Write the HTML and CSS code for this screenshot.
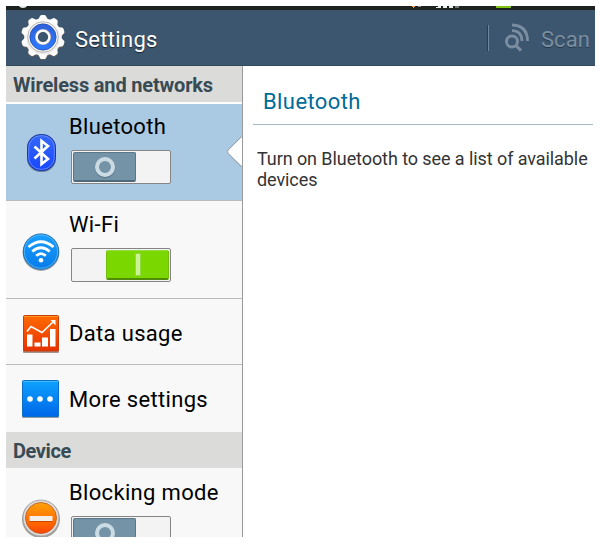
FILE: index.html
```html
<!DOCTYPE html>
<html lang="en">
<head>
    <meta charset="UTF-8">
    <meta name="viewport" content="width=device-width, initial-scale=1.0">
    <title>Settings</title>
    <link rel="stylesheet" href="styles.css">
</head>
<body>
    <div class="screen">
        <svg class="status-bar" width="589" height="4" viewBox="0 0 589 4">
            <path d="M13 0h8q-1 2-4 2q-3 0-4-2z" fill="#e8eeec"/>
            <path d="M406 0h3v1h-1v1h-1v-1h-1z" fill="#f39a32"/>
            <path d="M412 0h3v1h-3z" fill="#858b8a"/>
            <path d="M432 0h3v2h-5v-1h2zM437 0h4v2h-4zM443 0h4v2h-4z" fill="#edf1ee"/>
            <path d="M449 0h4v2h-4z" fill="#747a78"/>
            <path d="M490 0h15v2h-15z" fill="#82c414"/>
        </svg>

        <header class="header">
            <svg class="gear" width="46" height="46" viewBox="0 0 46 46">
                <defs>
                    <linearGradient id="metal" x1="0" y1="0" x2="0" y2="46" gradientUnits="userSpaceOnUse">
                        <stop offset="0" stop-color="#ffffff"/>
                        <stop offset="1" stop-color="#e9e6e5"/>
                    </linearGradient>
                    <linearGradient id="ring" x1="0" y1="0" x2="0" y2="1">
                        <stop offset="0" stop-color="#2f62dc"/>
                        <stop offset="1" stop-color="#2c78ff"/>
                    </linearGradient>
                </defs>
                <g fill="url(#metal)" class="gear-body">
                    <circle cx="23" cy="23" r="18.8"/>
                    <g id="teeth">
                        <path id="tooth" d="M18 6l1.8-3.5Q20.3 1 21.5 1h3q1.2 0 1.7 1.5L28 6z"/>
                        <use href="#tooth" transform="rotate(36 23 23)"/>
                        <use href="#tooth" transform="rotate(72 23 23)"/>
                        <use href="#tooth" transform="rotate(108 23 23)"/>
                        <use href="#tooth" transform="rotate(144 23 23)"/>
                    </g>
                    <use href="#teeth" transform="rotate(180 23 23)"/>
                </g>
                <circle cx="23" cy="23" r="15.3" fill="#f5f3f1" stroke="#aaa8a8" stroke-width=".8"/>
                <circle cx="23" cy="23" r="10" fill="none" stroke="url(#ring)" stroke-width="6.4"/>
                <circle cx="23" cy="23" r="13.1" fill="none" stroke="#244ba7" stroke-width=".7"/>
                <circle cx="23" cy="23" r="6.6" fill="#3b566e" stroke="#a9a8a9" stroke-width="3"/>
                <circle cx="23" cy="23" r="6.4" fill="none" stroke="#fff" stroke-width="2.2"/>
            </svg>
            <h1>Settings</h1>
            <button class="scan" disabled>
                <svg width="28" height="30" viewBox="0 0 28 30" fill="none" stroke="#7b8da0">
                    <circle cx="9" cy="18.5" r="5.5" stroke-width="3"/>
                    <path d="M13 22.5l5 5.2" stroke-width="3.2"/>
                    <path d="M9 7.6Q18.7 7.7 19 18" stroke-width="2.8"/>
                    <path d="M9 2Q24.3 2.5 24.6 18" stroke-width="2.8"/>
                </svg>
                <span>Scan</span>
            </button>
        </header>

        <div class="content">
            <nav class="sidebar">
                <h2 class="section">Wireless and networks</h2>

                <div class="item item-switch selected">
                    <svg class="icon" width="40" height="40" viewBox="0 0 40 40">
                        <defs>
                            <linearGradient id="bt" x1="0" y1="0" x2="0" y2="1">
                                <stop offset="0" stop-color="#3568f8"/>
                                <stop offset="1" stop-color="#1848ff"/>
                            </linearGradient>
                        </defs>
                        <rect x="6" y="1.5" width="29" height="37.5" rx="13.5" fill="#687f9e"/>
                        <rect x="6.5" y="1.5" width="28" height="36" rx="13" fill="url(#bt)" stroke="#1d369f"/>
                        <rect x="7.7" y="2.7" width="25.6" height="33.6" rx="12" fill="none" stroke="#6f92f7" stroke-width=".8"/>
                        <path d="M13.5 13.5L27 26l-6.5 5V8l6.500 5-13.500 12.500" fill="none" stroke="#fff" stroke-width="2.6"/>
                    </svg>
                    <div class="body">
                        <span class="label">Bluetooth</span>
                        <div class="switch"><div class="thumb"><i class="off"></i></div></div>
                    </div>
                    <svg class="pointer" width="16" height="34" viewBox="0 0 16 34">
                        <path d="M16 0v2L2.3 15.2q-1.5 1.6 0 3.2L16 31v3z" fill="#fff"/>
                        <path d="M15.5 1.5L2.3 14.8q-1.8 1.8 0 3.6L15.5 32" fill="none" stroke="#999"/>
                    </svg>
                </div>

                <div class="item item-switch">
                    <svg class="icon" width="40" height="40" viewBox="0 0 40 40">
                        <defs>
                            <linearGradient id="wifi" x1="0" y1="0" x2="0" y2="1">
                                <stop offset="0" stop-color="#18a0ff"/>
                                <stop offset="1" stop-color="#077be9"/>
                            </linearGradient>
                        </defs>
                        <circle cx="20" cy="21.6" r="18.4" fill="#a2a7ab"/>
                        <circle cx="20" cy="20.6" r="17.7" fill="url(#wifi)" stroke="#2670a8"/>
                        <circle cx="20" cy="20.6" r="16.6" fill="none" stroke="#5bbcff" stroke-width=".8"/>
                        <g fill="none" stroke="#fff" stroke-width="2.8">
                            <path d="M7.5 16Q20 5.5 32.5 16"/>
                            <path d="M11.3 20.5Q20 13 28.7 20.5"/>
                            <path d="M15.2 24.8Q20 20.5 24.8 24.8"/>
                        </g>
                        <circle cx="20" cy="29.2" r="2.3" fill="#fff"/>
                    </svg>
                    <div class="body">
                        <span class="label">Wi-Fi</span>
                        <div class="switch switch-on"><div class="thumb"><i class="on"></i></div></div>
                    </div>
                </div>

                <div class="item item-usage">
                    <svg class="icon" width="40" height="40" viewBox="0 0 40 40">
                        <defs>
                            <linearGradient id="usage" x1="0" y1="0" x2="0" y2="1">
                                <stop offset="0" stop-color="#ff6a00"/>
                                <stop offset="1" stop-color="#e63200"/>
                            </linearGradient>
                        </defs>
                        <rect x="2" y="2" width="36" height="37" rx="1" fill="#a4938c"/>
                        <rect x="2.5" y="1.5" width="35" height="35.5" rx="1" fill="url(#usage)" stroke="#c63f0c"/>
                        <path d="M3 2.5h34" stroke="#ff9518"/>
                        <path d="M6 17.5l4-5L21 18.5 33 7" fill="none" stroke="#fff" stroke-width="1.6"/>
                        <path d="M29.500 6h5v5.500z" fill="#fff"/>
                        <path d="M6 20.5h5.500v12H6zM13.500 28.500h6v4h-6zM21 23.500h6v9h-6zM29 15h5.500v17.500H29z" fill="#fff"/>
                    </svg>
                    <span class="label">Data usage</span>
                </div>

                <div class="item item-last">
                    <svg class="icon" width="40" height="40" viewBox="0 0 40 40">
                        <defs>
                            <linearGradient id="more" x1="0" y1="0" x2="0" y2="1">
                                <stop offset="0" stop-color="#0da2ff"/>
                                <stop offset="1" stop-color="#0067e8"/>
                            </linearGradient>
                        </defs>
                        <rect x="1" y="1" width="37" height="37" rx="1" fill="#929ba7"/>
                        <rect x="1.5" y=".5" width="36" height="36" rx="1" fill="url(#more)" stroke="#0870c6"/>
                        <path d="M2 1.5h35" stroke="#43baff"/>
                        <g fill="#fff">
                            <circle cx="9" cy="19" r="2.8"/>
                            <circle cx="19" cy="19" r="2.8"/>
                            <circle cx="29" cy="19" r="2.8"/>
                        </g>
                    </svg>
                    <span class="label">More settings</span>
                </div>

                <h2 class="section section-device">Device</h2>

                <div class="item item-switch item-blocking">
                    <svg class="icon" width="40" height="40" viewBox="0 0 40 40">
                        <defs>
                            <linearGradient id="block" x1="0" y1="0" x2="0" y2="1">
                                <stop offset="0" stop-color="#ffa20b"/>
                                <stop offset=".55" stop-color="#ff7200"/>
                                <stop offset="1" stop-color="#ff4508"/>
                            </linearGradient>
                        </defs>
                        <circle cx="20" cy="21" r="19" fill="#a19f9e"/>
                        <circle cx="20" cy="20" r="18" fill="#dedbd9" stroke="#999" stroke-width=".7"/>
                        <circle cx="20" cy="20" r="15.5" fill="url(#block)" stroke="#b85b25" stroke-width=".8"/>
                        <path d="M8.5 18h23v5h-23z" fill="#f4eee9"/>
                        <path d="M8.5 23.5h23" stroke="#cc4a00"/>
                    </svg>
                    <div class="body">
                        <span class="label">Blocking mode</span>
                        <div class="switch"><div class="thumb"><i class="off"></i></div></div>
                    </div>
                </div>
            </nav>

            <main class="detail">
                <h2>Bluetooth</h2>
                <p>Turn on Bluetooth to see a list of available devices</p>
            </main>
        </div>
    </div>
</body>
</html>
```
FILE: styles.css
```css
* {
    margin: 0;
    padding: 0;
    box-sizing: border-box;
}

body {
    padding: 6px 5px 11px 6px;
    height: 548px;
    background: #fff;
    font-family: Roboto, sans-serif;
    color: #000;
}

.screen {
    height: 531px;
    overflow: hidden;
    display: flex;
    flex-direction: column;
}

.status-bar {
    display: block;
    flex: none;
    background: #1d211f;
}

.header {
    flex: none;
    height: 56px;
    display: flex;
    align-items: center;
    padding: 0 5px 0 14px;
    background: #3b566e;
    border-bottom: 1px solid #304b5e;
}

.gear {
    margin-top: -2px;
}

.gear-body {
    filter: drop-shadow(0 1px 0 #675f5e);
}

.header h1 {
    margin-left: 9px;
    padding-top: 3px;
    font-size: 22px;
    font-weight: 400;
    letter-spacing: 0.3px;
    color: #fff;
    text-shadow: 0 1px 1px #18242d;
}

.scan {
    display: flex;
    align-items: center;
    height: 26px;
    margin-left: auto;
    border: none;
    border-left: 1px solid #71869a;
    box-shadow: -1px 0 #263e50;
    background: none;
    font-family: inherit;
    font-size: 22px;
    letter-spacing: 0.1px;
    color: #7b8da0;
    text-shadow: 0 1px #253b4d;
}

.scan svg {
    margin: 0 10px 0 14px;
}

.scan span {
    padding-top: 3px;
}

.content {
    flex: 1;
    min-height: 0;
    display: flex;
}

.sidebar {
    flex: none;
    width: 237px;
    background: #f8f8f8;
    border-right: 1px solid #999;
    overflow: hidden;
}

.section {
    height: 38px;
    padding: 2px 0 0 7px;
    background: #dbdbd9;
    border-bottom: 2px solid #fff;
    font-size: 20px;
    font-weight: 700;
    line-height: 34px;
    letter-spacing: -0.17px;
    color: #384b55;
}

.section-device {
    height: 36px;
    border-bottom: none;
    letter-spacing: -0.4px;
}

.item {
    display: flex;
    align-items: center;
    height: 66px;
    padding-left: 15px;
    border-bottom: 1px solid #bbb;
}

.item-usage {
    padding-top: 5px;
}

.item-last {
    height: 67px;
    padding-top: 2px;
    border-bottom: none;
}

.item-switch {
    position: relative;
    height: 98px;
    align-items: flex-start;
}

.item-switch .icon {
    margin-top: 30px;
}

.selected {
    height: 97px;
    background: #aacae3;
}

.selected .icon {
    margin-top: 29px;
}

.icon {
    flex: none;
    margin-right: 8px;
}

.label {
    font-size: 22px;
    line-height: 26px;
    letter-spacing: 0.33px;
    white-space: nowrap;
}

.body {
    display: flex;
    flex-direction: column;
    padding-top: 11px;
}

.selected .body {
    padding-top: 10px;
}

.switch {
    display: flex;
    width: 100px;
    height: 34px;
    margin: 10px 0 0 2px;
    padding: 1px;
    border: 1px solid #858585;
    border-radius: 2px;
    background: #f3f3f3;
}

.item-blocking .body {
    padding-top: 12px;
}

.switch-on {
    justify-content: flex-end;
}

.thumb {
    display: flex;
    align-items: center;
    justify-content: center;
    width: 63px;
    height: 30px;
    border: 1px solid #5c7888;
    border-bottom: 2px solid #4e6977;
    border-radius: 2px;
    background: #7493a6;
}

.switch-on .thumb {
    border-color: #73bd0e;
    border-top-color: #93df3c;
    border-bottom-color: #4e8b07;
    background: #7bd700;
}

.off {
    width: 20px;
    height: 20px;
    border: 4px solid #cbdbe4;
    border-radius: 50%;
    box-shadow: 0 1px 1px #536f80;
}

.on {
    width: 4px;
    height: 21px;
    background: #cbf199;
    box-shadow: 0 0 0 1px #91d83c;
}

.pointer {
    position: absolute;
    top: 31px;
    right: 0;
}

.detail {
    flex: 1;
    padding: 0 2px 0 10px;
}

.detail h2 {
    height: 59px;
    padding: 23px 0 0 10px;
    border-bottom: 1px solid #a1bac4;
    font-size: 22px;
    font-weight: 400;
    line-height: 26px;
    letter-spacing: 0.4px;
    color: #006b98;
}

.detail p {
    padding: 23px 0 0 4px;
    font-size: 18px;
    line-height: 21px;
    letter-spacing: -0.08px;
    color: #333;
}
```
